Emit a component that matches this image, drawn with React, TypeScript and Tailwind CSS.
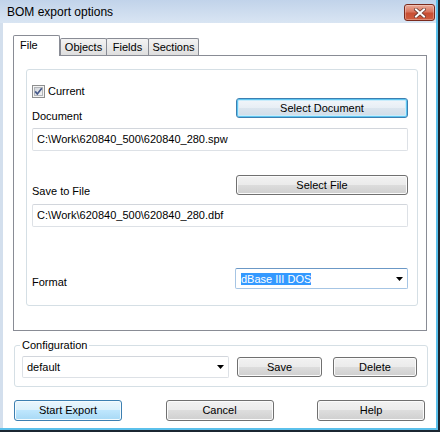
import React from 'react';

type Variant = 'normal' | 'default' | 'focus';

function Btn({ children, className = '', variant = 'normal' }: { children: React.ReactNode; className?: string; variant?: Variant }) {
  const skin =
    variant === 'default'
      ? 'border-[#3c7fb1] bg-[linear-gradient(to_bottom,#eaf6fd_0%,#d9f0fc_50%,#bee6fd_50%,#a7d9f5_100%)] shadow-[inset_0_0_0_1px_#f4fbfe]'
      : variant === 'focus'
        ? 'border-[#3c7fb1] bg-[linear-gradient(to_bottom,#f2f6fa_0%,#e7eef5_50%,#dbe5ee_50%,#d0dce8_100%)] shadow-[inset_0_0_0_1px_#5fc6f1,inset_0_0_0_2px_#c9ecfb]'
        : 'border-[#707070] bg-[linear-gradient(to_bottom,#f2f2f2_0%,#ebebeb_50%,#dddddd_50%,#cfcfcf_100%)] shadow-[inset_0_0_0_1px_#fbfbfb]';
  return (
    <button className={`flex items-center justify-center rounded-[3px] border text-[11px] leading-[13px] text-black ${skin} ${className}`}>
      {children}
    </button>
  );
}

function Arrow() {
  return (
    <svg width="7" height="4" viewBox="0 0 7 4">
      <path d="M0 0 H7 L3.5 4 Z" fill="#000" />
    </svg>
  );
}

function CheckBox() {
  return (
    <svg width="13" height="13" viewBox="0 0 13 13">
      <defs>
        <linearGradient id="cb" x1="0" y1="0" x2="1" y2="1">
          <stop offset="0" stopColor="#cfd3d9" />
          <stop offset="1" stopColor="#f6f6f6" />
        </linearGradient>
      </defs>
      <rect x="0.5" y="0.5" width="12" height="12" fill="#f4f4f4" stroke="#8e8f8f" />
      <rect x="2.5" y="2.5" width="8" height="8" fill="url(#cb)" stroke="#b3b6ba" />
      <path d="M3.2 6.4 L5.3 9 L9.8 3.2" stroke="#46598a" strokeWidth="1.7" fill="none" />
    </svg>
  );
}

function TextBox({ value }: { value: string }) {
  return (
    <div className="flex h-[23px] w-[376px] items-center rounded-[2px] border border-[#dde1e6] border-t-[#d2d6dc] bg-white pl-[4px] text-[11px] text-black">
      {value}
    </div>
  );
}

export default function App() {
  return (
    <div className="flex h-[432px] w-[440px] flex-col border-r-2 border-b-2 border-[#1b2631] font-['Liberation_Sans',Arial,sans-serif] text-black">
      <div className="flex flex-1 flex-col border-r-2 border-b-2 border-[#5bc0eb] bg-white">
        {/* title bar */}
        <div className="flex h-[23px] items-start justify-between bg-[linear-gradient(to_bottom,#c1d3ea,#d9e5f3)]">
          <span className="pl-[7px] pt-[5px] text-[12px] leading-[14px]">BOM export options</span>
          <button className="mr-[1px] mt-[4px] flex h-[17px] w-[31px] items-center justify-center rounded-[3px] border border-[#7a2a1d] bg-[linear-gradient(to_bottom,#eaab9b_0%,#d9765f_45%,#c84e33_55%,#cf5d3f_100%)] shadow-[inset_0_0_0_1px_rgba(255,255,255,0.3)]">
            <svg width="12" height="10" viewBox="0 0 12 10">
              <path d="M2 1.5 L10 8.5 M10 1.5 L2 8.5" stroke="#6b3a32" strokeWidth="3.6" strokeLinecap="square" />
              <path d="M2 1.5 L10 8.5 M10 1.5 L2 8.5" stroke="#fff" strokeWidth="2" strokeLinecap="square" />
            </svg>
          </button>
        </div>

        {/* body */}
        <div className="flex flex-1 flex-col border-l-[3px] border-[#d3dfed] pl-[10px] text-[11px]">
          {/* tabs */}
          <div className="mt-[12px] flex h-[20px] items-end">
            <div className="relative z-10 -mb-px h-[21px] w-[47px] rounded-t-[2px] border border-b-0 border-[#898c95] bg-white pl-[6px] pt-[3px] leading-[13px]">
              File
            </div>
            <div className="flex h-[17px] w-[47px] items-center justify-center rounded-t-[2px] border border-b-0 border-[#898c95] bg-[linear-gradient(to_bottom,#f3f3f3,#dedede)] leading-[13px]">
              Objects
            </div>
            <div className="-ml-px flex h-[17px] w-[43px] items-center justify-center rounded-t-[2px] border border-b-0 border-[#898c95] bg-[linear-gradient(to_bottom,#f3f3f3,#dedede)] leading-[13px]">
              Fields
            </div>
            <div className="-ml-px flex h-[17px] w-[51px] items-center justify-center rounded-t-[2px] border border-b-0 border-[#898c95] bg-[linear-gradient(to_bottom,#f3f3f3,#dedede)] leading-[13px]">
              Sections
            </div>
          </div>

          {/* tab panel */}
          <div className="h-[276px] w-[414px] border border-[#898c95] bg-white pl-[12px] pt-[13px]">
            <div className="h-[237px] w-[392px] rounded-[3px] border border-[#d5dfe5] pl-[5px] pr-[9px] pt-[15px]">
              <div className="flex items-start justify-between">
                <div className="flex flex-col">
                  <label className="flex h-[13px] items-center gap-[3px] leading-[13px]">
                    <CheckBox />
                    Current
                  </label>
                  <span className="mt-[11px] leading-[14px]">Document</span>
                </div>
                <Btn variant="focus" className="mt-[13px] h-[20px] w-[172px]">Select Document</Btn>
              </div>
              <div className="mt-[5px]">
                <TextBox value="C:\Work\620840_500\620840_280.spw" />
              </div>

              <div className="mt-[24px] flex items-start justify-between">
                <span className="mt-[9px] leading-[14px]">Save to File</span>
                <Btn className="h-[20px] w-[172px]">Select File</Btn>
              </div>
              <div className="mt-[6px]">
                <TextBox value="C:\Work\620840_500\620840_280.dbf" />
              </div>

              <div className="mt-[41px] flex items-start justify-between">
                <span className="mt-[7px] leading-[14px]">Format</span>
                <div className="flex h-[21px] w-[173px] items-center justify-between rounded-[2px] border border-[#a6c5e4] border-t-[#6b98c6] bg-white pl-[5px] pr-[4px]">
                  <span className="bg-[#3399ff] leading-[12px] text-white">dBase III DOS</span>
                  <Arrow />
                </div>
              </div>
            </div>
          </div>

          {/* configuration */}
          <fieldset className="ml-[1px] mt-[7px] w-[414px] rounded-[3px] border border-[#d5dfe5] px-[7px] pb-[8px]">
            <legend className="-ml-[2px] px-[2px] leading-[14px]">Configuration</legend>
            <div className="mt-[4px] flex items-start">
              <div className="flex h-[22px] w-[207px] items-center justify-between rounded-[2px] border border-[#dde1e6] border-t-[#d2d6dc] bg-white pl-[4px] pr-[4px]">
                <span>default</span>
                <Arrow />
              </div>
              <Btn className="ml-[8px] mt-[1px] h-[20px] w-[85px]">Save</Btn>
              <Btn className="ml-[11px] mt-[1px] h-[20px] w-[84px]">Delete</Btn>
            </div>
          </fieldset>

          {/* dialog buttons */}
          <div className="ml-[1px] mt-[13px] flex w-[411px] justify-between">
            <Btn variant="default" className="h-[21px] w-[108px]">Start Export</Btn>
            <Btn className="h-[21px] w-[108px]">Cancel</Btn>
            <Btn className="h-[21px] w-[108px]">Help</Btn>
          </div>
        </div>
      </div>
    </div>
  );
}
